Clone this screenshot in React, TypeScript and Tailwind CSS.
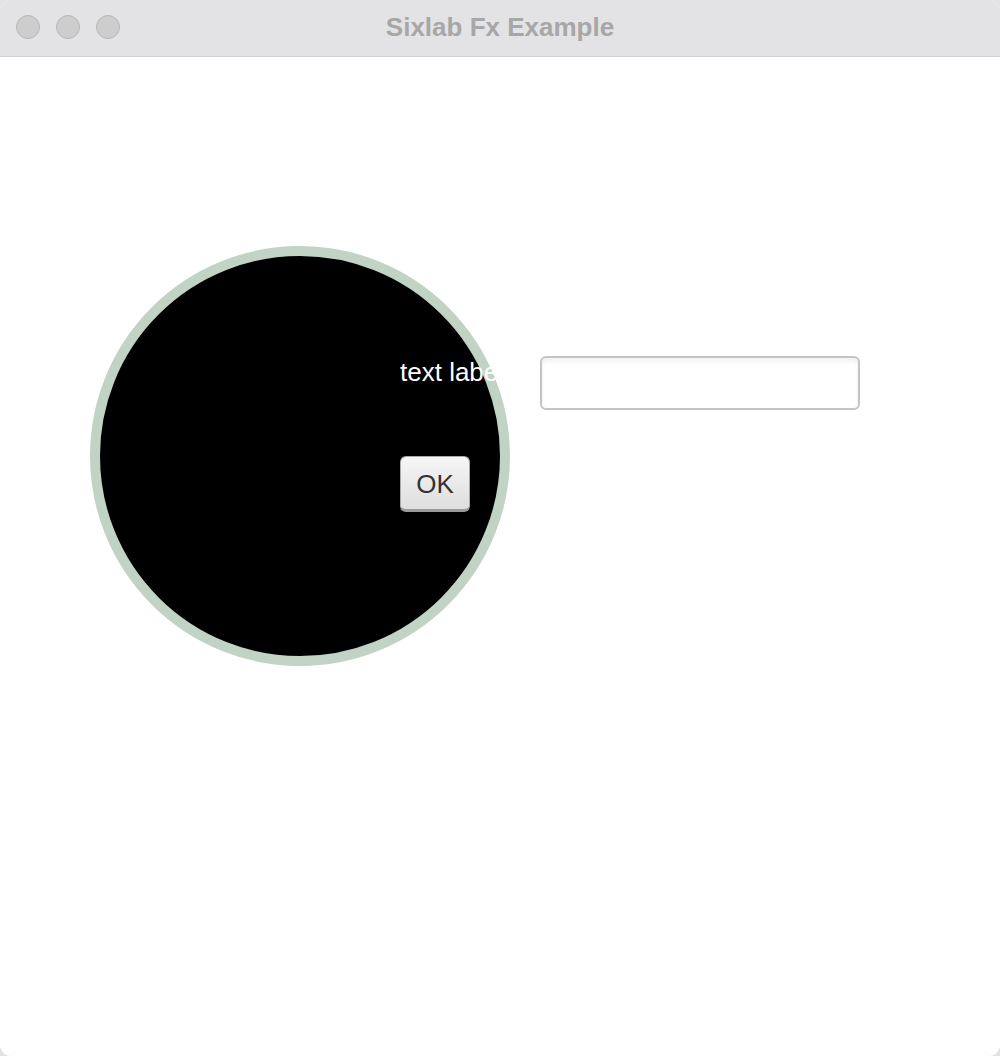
import React from "react";

export default function App() {
  return (
    <div className="w-[1000px] h-[1056px] bg-[#e2e2e2]" style={{ fontFamily: '"Liberation Sans", Arial, sans-serif' }}>
      <div className="w-full h-full rounded-[11px] overflow-hidden bg-white flex flex-col">
        {/* Title bar */}
        <div className="relative h-[57px] shrink-0 bg-[#e3e3e5] border-b border-[#d2d2d2] flex items-center">
          <div className="flex items-center gap-[16px] pl-[16px] pb-[2px]">
            <div className="w-[24px] h-[24px] rounded-full bg-[#cdcdcd] border border-[#b6b6b6]" />
            <div className="w-[24px] h-[24px] rounded-full bg-[#cdcdcd] border border-[#b6b6b6]" />
            <div className="w-[24px] h-[24px] rounded-full bg-[#cdcdcd] border border-[#b6b6b6]" />
          </div>
          <div className="absolute inset-x-0 top-0 h-[56px] flex items-center justify-center pb-[3px] text-[26px] font-bold text-[#a7a7a7] leading-none">
            Sixlab Fx Example
          </div>
        </div>

        {/* Scene */}
        <div className="relative flex-1">
          <div className="absolute left-[90px] top-[189px] w-[420px] h-[420px] rounded-full border-[10px] border-[#c1d3c5] bg-black" />
          <div className="relative pl-[400px] pt-[299px] grid grid-cols-[140px_320px] grid-rows-[54px_56px] gap-y-[46px]">
            <div className="self-start mt-[1px] w-[97px] overflow-hidden whitespace-nowrap text-white text-[26px] leading-[30px]">
              text label
            </div>
            <div className="w-[320px] h-[54px] rounded-[6px] border-[2px] border-[#c4c4c4] bg-white shadow-[inset_0_4px_4px_rgba(0,0,0,0.05)]" />
            <button className="w-[70px] h-[56px] rounded-[6px] border border-[#a9a9a9] border-b-[3px] border-b-[#9a9a9a] bg-gradient-to-b from-[#f6f6f6] to-[#dedede] text-[#333333] text-[26px] leading-none flex items-center justify-center pt-[1px]">
              OK
            </button>
            <div />
          </div>
        </div>
      </div>
    </div>
  );
}
